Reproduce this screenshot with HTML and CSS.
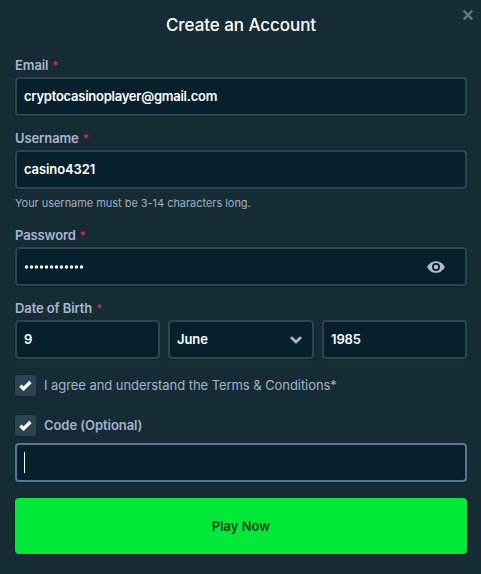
FILE: index.html
```
<!DOCTYPE html>
<html lang="en">
<head>
<meta charset="utf-8">
<title>Create an Account</title>
<link rel="stylesheet" href="styles.css">
</head>
<body>
<main class="modal">
  <button class="close" type="button" aria-label="Close"><svg width="12" height="12" viewBox="0 0 12 12"><path d="M1.7 1.7l8.6 8.6M10.3 1.7l-8.6 8.6"/></svg></button>
  <h1 class="title">Create an Account</h1>
  <form class="form">
    <div class="field">
      <div class="label"><span>Email</span><span class="req">*</span></div>
      <div class="input"><span class="value value-email">cryptocasinoplayer@gmail.com</span></div>
    </div>
    <div class="field field-user">
      <div class="label"><span>Username</span><span class="req">*</span></div>
      <div class="input"><span class="value">casino4321</span></div>
      <div class="hint">Your username must be 3-14 characters long.</div>
    </div>
    <div class="field">
      <div class="label"><span>Password</span><span class="req">*</span></div>
      <div class="input input-password">
        <svg class="dots" width="60" height="4" viewBox="0 0 60 4"><path d="M2.5 2h55.1"/></svg>
        <svg class="eye" width="18" height="12" viewBox="0 0 18 12"><path fill-rule="evenodd" d="M9 .2C5 .2 1.8 2.500.1 6C1.800 9.500 5 11.800 9 11.800S16.200 9.500 17.900 6C16.200 2.500 13 .2 9 .2zM9 2a4 4 0 1 1 0 8a4 4 0 0 1 0-8zM9 3.700a2.300 2.300 0 1 0 0 4.600a2.300 2.300 0 0 0 0-4.600z"/></svg>
      </div>
    </div>
    <div class="field">
      <div class="label"><span>Date of Birth</span><span class="req">*</span></div>
      <div class="date">
        <div class="input"><span class="value">9</span></div>
        <div class="input input-select"><span class="value">June</span><svg class="chevron" width="12" height="8" viewBox="0 0 12 8"><path d="M1.600 1.800L6 5.900l4.400-4.100"/></svg></div>
        <div class="input"><span class="value">1985</span></div>
      </div>
    </div>
    <div class="check">
      <span class="box"><svg width="13" height="11" viewBox="0 0 13 11"><path d="M1.400 5.700l3.200 3L11.400 2"/></svg></span>
      <span class="terms">I agree and understand the Terms &amp; Conditions*</span>
    </div>
    <div class="check check-code">
      <span class="box"><svg width="13" height="11" viewBox="0 0 13 11"><path d="M1.400 5.700l3.200 3L11.400 2"/></svg></span>
      <span class="code">Code (Optional)</span>
    </div>
    <div class="input input-focus"><span class="caret"></span></div>
    <button class="submit" type="button">Play Now</button>
  </form>
</main>
</body>
</html>
```
FILE: styles.css
```
* { box-sizing: border-box; }
body {
  margin: 0;
  background: #172d36;
  font-family: Inter, "Liberation Sans", sans-serif;
  font-size: 13px;
  color: #fff;
}
.modal { position: relative; height: 574px; padding: 13px 14px 0 15px; }
.close {
  position: absolute;
  top: 9px;
  right: 7px;
  width: 12px;
  height: 12px;
  padding: 0;
  border: 0;
  background: none;
}
.close svg { display: block; fill: none; stroke: #557a90; stroke-width: 2.5; }
.title {
  margin: 0 0 18px;
  height: 24px;
  line-height: 24px;
  text-align: center;
  font-size: 17px;
  font-weight: 500;
  letter-spacing: -0.06px;
}
.form { display: flex; flex-direction: column; }
.field { height: 61px; margin-bottom: 12px; }
.field-user { height: 85px; }
.label {
  display: flex;
  gap: 4px;
  height: 22px;
  line-height: 20px;
  color: #a9b5cd;
  font-weight: 600;
  letter-spacing: -0.1px;
}
.req { color: #ed1d49; font-size: 11px; }
.input {
  display: flex;
  align-items: center;
  height: 39px;
  padding: 0 7px;
  border: 2px solid #2b4551;
  border-radius: 4px;
  background: #07212c;
  box-shadow: 0 1px 2px #0003;
  font-weight: 600;
}
.value { padding-bottom: 2px; letter-spacing: -0.1px; }
.value-email { letter-spacing: -0.25px; }
.hint {
  height: 24px;
  padding-top: 4px;
  line-height: 20px;
  color: #a0adc3;
  font-size: 11px;
  letter-spacing: -0.04px;
}
.input-password { justify-content: space-between; padding-right: 20px; }
.dots { fill: none; stroke: #fff; stroke-width: 3.400; stroke-linecap: round; stroke-dasharray: 0 5; }
.eye { fill: #b1bad3; }
.date { display: grid; grid-template-columns: 145px 146px 145px; gap: 8px; }
.input-select { justify-content: space-between; padding-right: 10px; }
.chevron { fill: none; stroke: #b1bad3; stroke-width: 2.600; stroke-linecap: round; }
.check {
  display: flex;
  align-items: center;
  gap: 8px;
  height: 21px;
  margin: 4px 0 19px;
  color: #a4b1c9;
}
.terms { padding-bottom: 1px; letter-spacing: -0.06px; }
.check-code { margin: 0 0 7px; font-weight: 600; }
.code { padding-bottom: 1px; letter-spacing: -0.06px; }
.box {
  display: flex;
  align-items: center;
  justify-content: center;
  width: 21px;
  height: 21px;
  border-radius: 3px;
  background: #2c4552;
  box-shadow: 0 1px 2px #0003;
}
.box svg { fill: none; stroke: #fff; stroke-width: 3.3; }
.input-focus { border-color: #557a90; }
.caret { width: 1px; height: 21px; background: #fff; }
.submit {
  height: 56px;
  margin-top: 16px;
  padding: 0;
  border: 0;
  border-radius: 4px;
  background: #00e838;
  color: #034d14;
  font: inherit;
  font-weight: 600;
  box-shadow: 0 1px 3px #0003;
}
```
